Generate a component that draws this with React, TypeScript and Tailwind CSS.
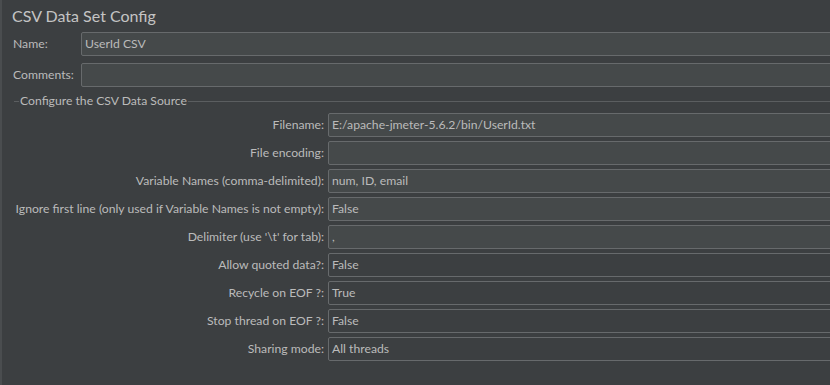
import React from 'react';

const rows: { label: string; value: string; combo?: boolean }[] = [
  { label: 'Filename:', value: 'E:/apache-jmeter-5.6.2/bin/UserId.txt' },
  { label: 'File encoding:', value: '' },
  { label: 'Variable Names (comma-delimited):', value: 'num, ID, email' },
  { label: 'Ignore first line (only used if Variable Names is not empty):', value: 'False' },
  { label: "Delimiter (use '\\t' for tab):", value: ',' },
  { label: 'Allow quoted data?:', value: 'False', combo: true },
  { label: 'Recycle on EOF ?:', value: 'True', combo: true },
  { label: 'Stop thread on EOF ?:', value: 'False', combo: true },
  { label: 'Sharing mode:', value: 'All threads', combo: true },
];

function Field({ value, combo }: { value: string; combo?: boolean }) {
  return (
    <div
      className={`flex-1 min-w-0 h-[24px] -mr-[4px] border border-[#676a6c] rounded-[2px] flex items-center pl-[3px] text-[#bbbbbb] ${
        combo ? 'bg-[#3c3f41]' : 'bg-[#45494a]'
      }`}
    >
      {value}
    </div>
  );
}

export default function App() {
  return (
    <div
      className="w-[830px] h-[385px] bg-[#3c3f41] border-l-2 border-[#4a4d4f] overflow-hidden text-[12.2px] text-[#bbbbbb]"
      style={{ fontFamily: 'Lato, "Open Sans", sans-serif' }}
    >
      {/* Header */}
      <div className="h-[32px] pl-[10px] flex items-center text-[16px] text-[#c4c4c4]">CSV Data Set Config</div>

      <div className="flex items-center h-[24px]">
        <div className="w-[79px] flex-none pl-[11px]">Name:</div>
        <Field value="UserId CSV" />
      </div>
      <div className="flex items-center h-[24px] mt-[7px]">
        <div className="w-[79px] flex-none pl-[11px]">Comments:</div>
        <Field value="" />
      </div>

      {/* Group box */}
      <div className="mt-[8px] flex items-center h-[12px]">
        <div className="w-[5px] h-px bg-[#5b5e60] ml-[12px]" />
        <span className="px-[1px] leading-none">Configure the CSV Data Source</span>
        <div className="flex-1 h-px bg-[#5b5e60]" />
      </div>

      <div className="mt-[6px] flex flex-col gap-[4px]">
        {rows.map((r) => (
          <div key={r.label} className="flex items-center h-[24px]">
            <div className="w-[326px] flex-none pr-[4px] text-right whitespace-nowrap">{r.label}</div>
            <Field value={r.value} combo={r.combo} />
          </div>
        ))}
      </div>
    </div>
  );
}
